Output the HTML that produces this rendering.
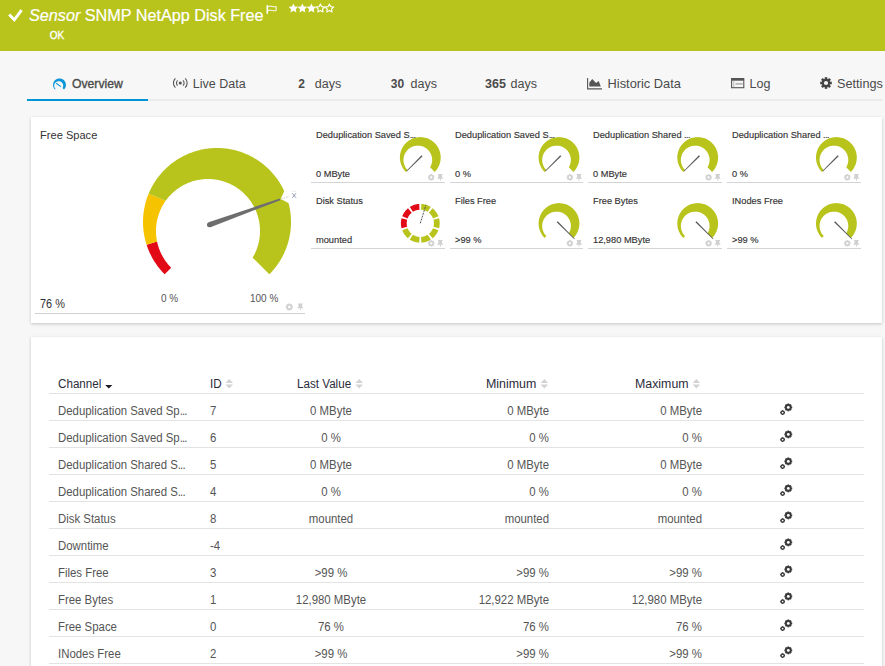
<!DOCTYPE html>
<html><head><meta charset="utf-8">
<style>
html,body{margin:0;padding:0;}
body{width:885px;height:666px;overflow:hidden;position:relative;background:#f7f7f7;font-family:"Liberation Sans",sans-serif;}
.a{position:absolute;white-space:nowrap;line-height:1;}
#hdr{position:absolute;left:0;top:0;width:885px;height:51px;background:#b8c41c;}
.tab{color:#4a4a4a;font-size:12.5px;top:77.7px;}
.card{position:absolute;background:#fff;box-shadow:0 1px 3px rgba(0,0,0,0.21);}
.st{font-size:9.6px;color:#333;-webkit-text-stroke:0.15px #333;transform:scaleX(0.965);transform-origin:0 0;}
.sv{font-size:9.6px;color:#333;-webkit-text-stroke:0.15px #333;transform:scaleX(0.965);transform-origin:0 0;}
.hl{position:absolute;height:1px;background:#d4d4d4;}
.th{font-size:12px;color:#2b2b3b;top:378px;transform:scaleX(0.97);transform-origin:0 0;}
.td{font-size:12px;color:#555;transform:scaleX(0.95);transform-origin:0 0;}
.tc{transform-origin:50% 0;}
.tr{transform-origin:100% 0;}
.row{position:absolute;left:49px;width:815px;height:1px;background:#e4e4e4;}
</style></head><body>
<div id="hdr"></div>
<svg class="a" style="left:0;top:0" width="885" height="51">
  <path d="M9.2,14.6 L14.3,19.8 L21.6,10.2" fill="none" stroke="#fff" stroke-width="2.9"/>
  <rect x="266.5" y="5.2" width="1.6" height="8.6" fill="#fff"/>
  <path d="M268,6.5 Q270.2,5.7 272.2,6.5 T276.2,6.5 V10.5 Q274.2,11.3 272.2,10.5 T268,10.5" fill="none" stroke="#fff" stroke-width="1"/>
</svg>
<div class="a" style="left:29px;top:7.4px;font-size:16.2px;color:#fff;-webkit-text-stroke:0.2px #fff;"><i>Sensor</i> SNMP NetApp Disk Free</div>
<div class="a" style="left:49.7px;top:30.6px;font-size:10px;color:#fff;-webkit-text-stroke:0.35px #fff;">OK</div>
<svg class="a" style="left:0;top:0" width="340" height="20"><polygon points="293.40,3.40 294.84,6.42 298.16,6.85 295.73,9.16 296.34,12.45 293.40,10.85 290.46,12.45 291.07,9.16 288.64,6.85 291.96,6.42" fill="#fff"/><polygon points="302.40,3.40 303.84,6.42 307.16,6.85 304.73,9.16 305.34,12.45 302.40,10.85 299.46,12.45 300.07,9.16 297.64,6.85 300.96,6.42" fill="#fff"/><polygon points="311.40,3.40 312.84,6.42 316.16,6.85 313.73,9.16 314.34,12.45 311.40,10.85 308.46,12.45 309.07,9.16 306.64,6.85 309.96,6.42" fill="#fff"/><polygon points="320.40,3.90 321.69,6.62 324.68,7.01 322.49,9.08 323.05,12.04 320.40,10.60 317.75,12.04 318.31,9.08 316.12,7.01 319.11,6.62" fill="none" stroke="#fff" stroke-width="1.1" stroke-linejoin="round"/><polygon points="329.40,3.90 330.69,6.62 333.68,7.01 331.49,9.08 332.05,12.04 329.40,10.60 326.75,12.04 327.31,9.08 325.12,7.01 328.11,6.62" fill="none" stroke="#fff" stroke-width="1.1" stroke-linejoin="round"/></svg>

<!-- tabs -->
<div class="a" style="left:27px;top:99px;width:856px;height:2px;background:#ebebeb;"></div>
<div class="a" style="left:27px;top:99px;width:121px;height:2px;background:#0096d6;"></div>
<svg class="a" style="left:0;top:60px" width="80" height="40"><path d="M55.02,29.54 L54.5,28.98 L54.05,28.36 L53.68,27.69 L53.39,26.98 L53.19,26.24 L53.08,25.48 L53.05,24.72 L53.12,23.96 L53.28,23.21 L53.52,22.48 L53.85,21.79 L54.26,21.15 L54.74,20.55 L55.29,20.02 L55.89,19.55 L56.55,19.16 L57.25,18.85 L57.98,18.63 L58.74,18.5 L59.5,18.45 L60.26,18.5 L61.02,18.63 L61.75,18.85 L62.45,19.16 L63.11,19.55 L63.71,20.02 L64.26,20.55 L64.74,21.15 L65.15,21.79 L65.48,22.48 L65.72,23.21 L65.88,23.96 L65.95,24.72 L65.92,25.48 L65.81,26.24 L65.61,26.98 L65.32,27.69 L64.95,28.36 L64.5,28.98 L63.98,29.54 L62.54,28.05 L62.79,27.58 L62.97,27.11 L63.1,26.63 L63.18,26.15 L63.2,25.69 L63.18,25.23 L63.11,24.8 L63,24.38 L62.86,23.99 L62.69,23.61 L62.48,23.26 L62.25,22.93 L61.99,22.63 L61.7,22.35 L61.39,22.09 L61.06,21.87 L60.7,21.67 L60.32,21.5 L59.92,21.37 L59.5,21.27 L59.06,21.21 L58.61,21.2 L58.14,21.24 L57.66,21.32 L57.18,21.46 L56.71,21.67 L56.25,21.93 L55.81,22.25 L55.4,22.64 L55.03,23.09 L54.72,23.6 L54.47,24.16 L54.3,24.75 L54.21,25.38 L54.21,26.02 L54.31,26.67 L54.49,27.3 L54.77,27.9 L55.14,28.45 L55.59,28.95Z" fill="#0a96d8"/><path d="M56.2,23.2 L60.9,26.6" stroke="#0a96d8" stroke-width="1.1"/></svg>
<div class="a tab" style="left:72px;font-size:12.2px;top:77.9px;-webkit-text-stroke:0.35px #4a4a4a;">Overview</div>
<svg class="a" style="left:173px;top:77px" width="15" height="12">
  <circle cx="7.3" cy="6" r="1.6" fill="#555"/>
  <path d="M4.6,3.3 A3.8,3.8 0 0 0 4.6,8.7 M10,3.3 A3.8,3.8 0 0 1 10,8.7" fill="none" stroke="#555" stroke-width="1.1"/>
  <path d="M2.4,1.3 A6.6,6.6 0 0 0 2.4,10.7 M12.2,1.3 A6.6,6.6 0 0 1 12.2,10.7" fill="none" stroke="#555" stroke-width="1.1"/>
</svg>
<div class="a tab" style="left:192.8px;">Live Data</div>
<div class="a tab" style="left:298.3px;font-weight:bold;font-size:12px;top:78.1px;">2</div>
<div class="a tab" style="left:314.8px;">days</div>
<div class="a tab" style="left:390.8px;font-weight:bold;font-size:12px;top:78.1px;">30</div>
<div class="a tab" style="left:410.5px;">days</div>
<div class="a tab" style="left:485px;font-weight:bold;font-size:12.5px;">365</div>
<div class="a tab" style="left:510.6px;">days</div>
<svg class="a" style="left:586px;top:77px" width="17" height="13">
  <path d="M1.6,1 V11.9 H16" fill="none" stroke="#555" stroke-width="1.1"/>
  <path d="M3.3,9.6 V5.7 L6.2,2 L10.1,6 L12.7,4 L14.8,9.6 Z" fill="#555"/>
</svg>
<div class="a tab" style="left:607.6px;font-size:12.8px;">Historic Data</div>
<svg class="a" style="left:731px;top:78px" width="15" height="12">
  <rect x="0.6" y="0.5" width="12.2" height="9.2" fill="none" stroke="#555" stroke-width="1.1"/>
  <rect x="0.6" y="0" width="12.2" height="2.7" fill="#555"/>
  <rect x="4.4" y="4.9" width="7.4" height="1.9" fill="#bbb"/>
  <rect x="2" y="3" width="1.4" height="6" fill="#ccc"/>
</svg>
<div class="a tab" style="left:749.5px;">Log</div>
<svg class="a" style="left:819px;top:76px" width="14" height="14">
  <g transform="translate(7,7)">
    <circle r="4.2" fill="#444"/>
    <g fill="#444">
      <rect x="-1.3" y="-5.8" width="2.6" height="11.6"/>
      <rect x="-1.3" y="-5.8" width="2.6" height="11.6" transform="rotate(45)"/>
      <rect x="-1.3" y="-5.8" width="2.6" height="11.6" transform="rotate(90)"/>
      <rect x="-1.3" y="-5.8" width="2.6" height="11.6" transform="rotate(135)"/>
    </g>
    <circle r="2.1" fill="#f7f7f7"/>
  </g>
</svg>
<div class="a tab" style="left:837px;font-size:12.7px;">Settings</div>

<!-- card 1 -->
<div class="card" style="left:31px;top:117px;width:851px;height:206px;"></div>
<div class="a" style="left:40px;top:130.2px;font-size:11.8px;color:#333;transform:scaleX(0.94);transform-origin:0 0;">Free Space</div>
<svg class="a" style="left:0;top:0" width="885" height="340">
<path d="M164.67,274.33 L164.06,273.71 L163.46,273.08 L162.86,272.44 L162.27,271.8 L161.68,271.15 L161.11,270.5 L160.54,269.84 L159.98,269.17 L159.43,268.49 L158.89,267.81 L158.35,267.13 L157.82,266.43 L157.3,265.73 L156.79,265.02 L156.29,264.31 L155.8,263.59 L155.31,262.87 L154.83,262.14 L154.36,261.41 L153.9,260.66 L153.45,259.92 L153.01,259.17 L152.58,258.41 L152.15,257.65 L151.74,256.88 L151.33,256.11 L150.93,255.34 L150.55,254.56 L150.17,253.77 L149.8,252.98 L149.44,252.19 L149.09,251.39 L148.74,250.59 L148.41,249.78 L148.09,248.97 L147.78,248.16 L147.47,247.34 L147.18,246.52 L146.9,245.69 L146.62,244.87 L157.07,241.47 L157.22,242.2 L157.39,242.93 L157.57,243.66 L157.75,244.39 L157.95,245.11 L158.16,245.83 L158.38,246.55 L158.61,247.27 L158.85,247.98 L159.1,248.69 L159.36,249.4 L159.64,250.1 L159.92,250.8 L160.21,251.5 L160.51,252.19 L160.83,252.88 L161.15,253.57 L161.49,254.25 L161.83,254.92 L162.18,255.59 L162.55,256.26 L162.92,256.92 L163.3,257.57 L163.7,258.23 L164.1,258.87 L164.51,259.51 L164.93,260.14 L165.36,260.77 L165.8,261.39 L166.25,262 L166.71,262.61 L167.18,263.21 L167.66,263.81 L168.14,264.4 L168.64,264.98 L169.14,265.55 L169.65,266.12 L170.17,266.68 L170.7,267.23 L171.23,267.77Z" fill="#e30a17"/>
<path d="M146.62,244.87 L146.23,243.62 L145.86,242.37 L145.51,241.11 L145.18,239.84 L144.88,238.57 L144.6,237.29 L144.34,236.01 L144.1,234.72 L143.89,233.43 L143.7,232.14 L143.53,230.84 L143.39,229.54 L143.26,228.24 L143.16,226.94 L143.09,225.63 L143.04,224.32 L143.01,223.02 L143,221.71 L143.02,220.4 L143.06,219.09 L143.12,217.79 L143.21,216.48 L143.31,215.18 L143.45,213.88 L143.6,212.58 L143.78,211.29 L143.98,209.99 L144.2,208.71 L144.45,207.42 L144.72,206.14 L145.01,204.87 L145.32,203.6 L145.66,202.33 L146.02,201.08 L146.4,199.82 L146.8,198.58 L147.23,197.34 L147.67,196.11 L148.14,194.89 L148.63,193.68 L165.7,200.75 L165.12,201.58 L164.56,202.42 L164.01,203.27 L163.47,204.14 L162.95,205.02 L162.45,205.92 L161.96,206.83 L161.49,207.75 L161.03,208.68 L160.6,209.62 L160.18,210.58 L159.77,211.55 L159.39,212.53 L159.03,213.52 L158.68,214.52 L158.36,215.53 L158.05,216.54 L157.76,217.57 L157.5,218.61 L157.25,219.65 L157.03,220.7 L156.83,221.76 L156.65,222.83 L156.49,223.9 L156.35,224.98 L156.23,226.06 L156.14,227.15 L156.07,228.24 L156.03,229.34 L156,230.44 L156,231.54 L156.03,232.64 L156.07,233.75 L156.14,234.85 L156.24,235.96 L156.35,237.06 L156.5,238.17 L156.66,239.27 L156.85,240.37 L157.07,241.47Z" fill="#f5c300"/>
<path d="M148.63,193.68 L149.14,192.48 L149.68,191.28 L150.23,190.1 L150.8,188.92 L151.4,187.76 L152.01,186.61 L152.65,185.46 L153.31,184.33 L153.98,183.21 L154.68,182.1 L155.39,181.01 L156.12,179.93 L156.88,178.86 L157.65,177.8 L158.44,176.76 L159.25,175.73 L160.07,174.72 L160.92,173.72 L161.78,172.74 L162.66,171.77 L163.56,170.82 L164.47,169.88 L165.4,168.96 L166.34,168.06 L167.3,167.17 L168.28,166.3 L169.27,165.45 L170.28,164.61 L171.3,163.8 L172.34,163 L173.39,162.22 L174.45,161.46 L175.53,160.71 L176.62,159.99 L177.72,159.29 L178.83,158.6 L179.96,157.94 L181.1,157.29 L182.24,156.67 L183.4,156.07 L184.58,155.48 L185.76,154.92 L186.95,154.38 L188.15,153.86 L189.35,153.36 L190.57,152.88 L191.8,152.42 L193.03,151.99 L194.27,151.58 L195.52,151.19 L196.77,150.82 L198.03,150.47 L199.3,150.15 L200.57,149.85 L201.85,149.57 L203.13,149.31 L204.42,149.08 L205.71,148.87 L207.01,148.68 L208.3,148.51 L209.6,148.37 L210.9,148.25 L212.21,148.16 L213.51,148.08 L214.82,148.03 L216.13,148.01 L217.44,148 L218.74,148.02 L220.05,148.06 L221.36,148.13 L222.66,148.22 L223.96,148.33 L225.26,148.46 L226.56,148.62 L227.86,148.8 L229.15,149 L230.44,149.23 L231.72,149.48 L233,149.75 L234.27,150.04 L235.54,150.36 L236.81,150.7 L238.06,151.06 L239.31,151.44 L240.56,151.85 L241.79,152.28 L243.02,152.73 L244.24,153.2 L245.45,153.69 L246.66,154.2 L247.85,154.74 L249.03,155.29 L250.21,155.87 L251.37,156.47 L252.52,157.08 L253.66,157.72 L254.79,158.38 L255.91,159.06 L257.02,159.75 L258.11,160.47 L259.19,161.21 L260.26,161.96 L261.31,162.74 L262.36,163.53 L263.38,164.34 L264.39,165.17 L265.39,166.01 L266.37,166.88 L267.34,167.76 L268.29,168.66 L269.22,169.57 L270.14,170.5 L271.04,171.45 L271.93,172.41 L272.8,173.39 L273.65,174.38 L274.48,175.39 L275.29,176.42 L276.09,177.45 L276.87,178.5 L277.63,179.57 L278.37,180.65 L279.09,181.74 L279.79,182.84 L280.47,183.96 L281.13,185.08 L281.78,186.22 L282.4,187.37 L283,188.53 L283.58,189.71 L284.14,190.89 L283.55,192.58 L282.85,194.27 L282.11,195.93 L281.33,197.55 L280.51,199.14 L282.15,199.84 L283.78,200.59 L285.41,201.39 L287.03,202.25 L288.57,203.18 L288.89,204.44 L289.19,205.72 L289.46,206.99 L289.72,208.28 L289.95,209.56 L290.16,210.85 L290.34,212.15 L290.5,213.45 L290.64,214.75 L290.76,216.05 L290.85,217.35 L290.92,218.66 L290.97,219.97 L291,221.27 L291,222.58 L290.98,223.89 L290.93,225.2 L290.86,226.5 L290.77,227.81 L290.66,229.11 L290.52,230.41 L290.36,231.71 L290.18,233 L289.97,234.29 L289.74,235.58 L289.49,236.86 L289.22,238.14 L288.92,239.42 L288.6,240.68 L288.26,241.95 L287.9,243.2 L287.51,244.45 L287.1,245.69 L286.67,246.93 L286.22,248.16 L285.75,249.38 L285.26,250.59 L284.74,251.79 L284.2,252.98 L283.64,254.16 L283.07,255.34 L282.47,256.5 L281.85,257.65 L281.21,258.79 L280.55,259.92 L279.87,261.04 L279.17,262.14 L278.45,263.23 L277.71,264.31 L276.95,265.38 L276.18,266.43 L275.38,267.47 L274.57,268.49 L273.74,269.5 L272.89,270.5 L272.03,271.48 L271.14,272.44 L270.24,273.39 L269.33,274.33 L252.65,257.65 L253.11,256.86 L253.56,256.06 L253.99,255.26 L254.41,254.46 L254.81,253.65 L255.19,252.84 L255.56,252.03 L255.91,251.21 L256.25,250.4 L256.57,249.58 L256.87,248.76 L257.17,247.93 L257.44,247.11 L257.7,246.29 L257.95,245.46 L258.18,244.64 L258.4,243.81 L258.6,242.99 L258.79,242.17 L258.96,241.34 L259.12,240.52 L259.27,239.7 L259.4,238.88 L259.52,238.07 L259.62,237.25 L259.71,236.44 L259.79,235.63 L259.86,234.82 L259.91,234.01 L259.95,233.21 L259.98,232.41 L260,231.61 L260,230.82 L259.99,230.03 L259.97,229.24 L259.94,228.46 L259.89,227.68 L259.84,226.9 L259.77,226.13 L259.69,225.36 L259.6,224.6 L259.5,223.84 L259.39,223.08 L259.27,222.33 L259.14,221.59 L259,220.85 L258.85,220.11 L258.68,219.38 L258.51,218.65 L258.33,217.93 L258.14,217.21 L257.94,216.5 L257.73,215.8 L257.51,215.09 L257.28,214.4 L257.04,213.71 L256.79,213.02 L256.54,212.34 L256.27,211.67 L256,211 L255.72,210.34 L255.43,209.68 L255.13,209.03 L254.82,208.38 L254.51,207.74 L254.19,207.11 L253.86,206.48 L253.52,205.86 L253.17,205.24 L252.82,204.63 L252.45,204.02 L252.09,203.42 L251.71,202.83 L251.32,202.24 L250.93,201.66 L250.53,201.09 L250.13,200.52 L249.72,199.95 L249.29,199.4 L248.87,198.85 L248.43,198.3 L247.99,197.76 L247.54,197.23 L247.09,196.71 L246.63,196.19 L246.16,195.68 L245.68,195.17 L245.2,194.67 L244.71,194.18 L244.22,193.69 L243.72,193.21 L243.21,192.74 L242.7,192.27 L242.18,191.81 L241.65,191.36 L241.12,190.91 L240.58,190.47 L240.03,190.04 L239.48,189.61 L238.92,189.19 L238.36,188.78 L237.79,188.38 L237.21,187.98 L236.63,187.59 L236.04,187.21 L235.44,186.83 L234.84,186.46 L234.24,186.1 L233.62,185.75 L233.01,185.41 L232.38,185.07 L231.75,184.74 L231.12,184.42 L230.47,184.11 L229.83,183.8 L229.17,183.51 L228.52,183.22 L227.85,182.94 L227.18,182.67 L226.51,182.4 L225.83,182.15 L225.14,181.91 L224.45,181.67 L223.75,181.44 L223.05,181.23 L222.34,181.02 L221.63,180.82 L220.91,180.63 L220.19,180.45 L219.46,180.28 L218.73,180.12 L217.99,179.97 L217.25,179.83 L216.5,179.7 L215.75,179.58 L214.99,179.47 L214.23,179.38 L213.47,179.29 L212.7,179.21 L211.93,179.15 L211.15,179.1 L210.37,179.05 L209.59,179.02 L208.8,179.01 L208.01,179 L207.21,179.01 L206.41,179.02 L205.61,179.05 L204.81,179.1 L204,179.15 L203.19,179.22 L202.38,179.3 L201.57,179.4 L200.75,179.51 L199.93,179.63 L199.12,179.76 L198.29,179.91 L197.47,180.08 L196.65,180.25 L195.83,180.44 L195,180.65 L194.18,180.87 L193.35,181.11 L192.53,181.35 L191.71,181.62 L190.88,181.9 L190.06,182.19 L189.24,182.5 L188.42,182.83 L187.6,183.17 L186.79,183.52 L185.98,183.89 L185.17,184.28 L184.36,184.68 L183.56,185.1 L182.76,185.54 L181.96,185.99 L181.17,186.45 L180.39,186.94 L179.61,187.44 L178.83,187.95 L178.06,188.48 L177.3,189.03 L176.55,189.59 L175.8,190.17 L175.06,190.77 L174.32,191.38 L173.6,192 L172.88,192.65 L172.18,193.31 L171.48,193.98 L170.79,194.67 L170.12,195.38 L169.45,196.1 L168.79,196.84 L168.15,197.59 L167.52,198.36 L166.9,199.14 L166.3,199.94 L165.7,200.75Z" fill="#b8c41c"/>
<path d="M210.35,227.16 L280.34,200.15 L279.73,198.46 L208.59,222.26Z" fill="#6e6e6e"/>
<defs><linearGradient id="ng" x1="0" y1="0" x2="1" y2="1"><stop offset="0" stop-color="#333"/><stop offset="1" stop-color="#777"/></linearGradient></defs>
<path d="M281,199 L289,196.5" stroke="#bbb" stroke-width="0.8" stroke-dasharray="1.5,1.2"/><path d="M292.3,193.2 L296,197.8 M296,193.2 L292.3,197.8" stroke="#8a8fa8" stroke-width="0.9"/><path d="M291.5,191.3 H296.5" stroke="#ddd" stroke-width="0.6"/>
<circle cx="209.47" cy="224.71" r="2.5" fill="#6b6b6b"/>
<path d="M405.88,171.92 L405.05,171.05 L404.28,170.13 L403.56,169.16 L402.91,168.16 L402.31,167.12 L401.77,166.04 L401.3,164.94 L400.9,163.8 L400.56,162.65 L400.29,161.48 L400.09,160.3 L399.96,159.1 L399.9,157.9 L399.92,156.7 L400,155.5 L400.15,154.31 L400.37,153.13 L400.67,151.96 L401.03,150.82 L401.45,149.69 L401.95,148.6 L402.5,147.53 L403.12,146.5 L403.8,145.51 L404.53,144.56 L405.32,143.65 L406.16,142.79 L407.05,141.99 L407.99,141.23 L408.97,140.54 L409.98,139.9 L411.04,139.32 L412.12,138.81 L413.24,138.36 L414.38,137.98 L415.54,137.66 L416.71,137.42 L417.9,137.24 L419.1,137.14 L420.3,137.1 L421.5,137.14 L422.7,137.24 L423.89,137.42 L425.06,137.66 L426.22,137.98 L427.36,138.36 L428.48,138.81 L429.56,139.32 L430.62,139.9 L431.63,140.54 L432.61,141.23 L433.55,141.99 L434.44,142.79 L435.28,143.65 L436.07,144.56 L436.8,145.51 L437.48,146.5 L438.1,147.53 L438.65,148.6 L439.15,149.69 L439.57,150.82 L439.93,151.96 L440.23,153.13 L440.45,154.31 L440.6,155.5 L440.68,156.7 L440.7,157.9 L440.64,159.1 L440.51,160.3 L440.31,161.48 L440.04,162.65 L439.7,163.8 L439.3,164.94 L438.83,166.04 L438.29,167.12 L437.69,168.16 L437.04,169.16 L436.32,170.13 L435.55,171.05 L434.72,171.92 L430.13,167.33 L430.54,166.6 L430.9,165.85 L431.21,165.1 L431.47,164.35 L431.69,163.59 L431.87,162.83 L432,162.08 L432.09,161.33 L432.14,160.59 L432.15,159.86 L432.13,159.14 L432.07,158.43 L431.98,157.73 L431.85,157.05 L431.69,156.38 L431.51,155.72 L431.29,155.09 L431.05,154.47 L430.78,153.86 L430.49,153.28 L430.17,152.71 L429.83,152.16 L429.47,151.63 L429.09,151.12 L428.68,150.62 L428.25,150.15 L427.8,149.7 L427.34,149.26 L426.85,148.85 L426.34,148.46 L425.82,148.09 L425.27,147.74 L424.71,147.41 L424.13,147.11 L423.54,146.83 L422.92,146.58 L422.29,146.36 L421.64,146.17 L420.98,146 L420.3,145.86 L419.61,145.76 L418.9,145.69 L418.18,145.65 L417.46,145.65 L416.72,145.69 L415.97,145.77 L415.22,145.88 L414.46,146.04 L413.71,146.25 L412.95,146.5 L412.2,146.79 L411.45,147.14 L410.71,147.53 L409.99,147.97 L409.29,148.46 L408.6,149 L407.94,149.59 L407.31,150.23 L406.72,150.91 L406.16,151.64 L405.64,152.42 L405.17,153.23 L404.75,154.09 L404.38,154.98 L404.08,155.9 L403.83,156.85 L403.65,157.83 L403.53,158.82 L403.48,159.83 L403.51,160.84 L403.61,161.86 L403.78,162.87 L404.02,163.87 L404.34,164.86 L404.73,165.82 L405.19,166.76 L405.72,167.66 L406.31,168.53 L406.97,169.35 L407.68,170.12Z" fill="#b8c41c"/><path d="M421.54,155.2 L406.26,171.04 L406.76,171.54 L422.6,156.26Z" fill="#5a5a5a"/>
<path d="M544.58,171.92 L543.75,171.05 L542.98,170.13 L542.26,169.16 L541.61,168.16 L541.01,167.12 L540.47,166.04 L540,164.94 L539.6,163.8 L539.26,162.65 L538.99,161.48 L538.79,160.3 L538.66,159.1 L538.6,157.9 L538.62,156.7 L538.7,155.5 L538.85,154.31 L539.07,153.13 L539.37,151.96 L539.73,150.82 L540.15,149.69 L540.65,148.6 L541.2,147.53 L541.82,146.5 L542.5,145.51 L543.23,144.56 L544.02,143.65 L544.86,142.79 L545.75,141.99 L546.69,141.23 L547.67,140.54 L548.68,139.9 L549.74,139.32 L550.82,138.81 L551.94,138.36 L553.08,137.98 L554.24,137.66 L555.41,137.42 L556.6,137.24 L557.8,137.14 L559,137.1 L560.2,137.14 L561.4,137.24 L562.59,137.42 L563.76,137.66 L564.92,137.98 L566.06,138.36 L567.18,138.81 L568.26,139.32 L569.32,139.9 L570.33,140.54 L571.31,141.23 L572.25,141.99 L573.14,142.79 L573.98,143.65 L574.77,144.56 L575.5,145.51 L576.18,146.5 L576.8,147.53 L577.35,148.6 L577.85,149.69 L578.27,150.82 L578.63,151.96 L578.93,153.13 L579.15,154.31 L579.3,155.5 L579.38,156.7 L579.4,157.9 L579.34,159.1 L579.21,160.3 L579.01,161.48 L578.74,162.65 L578.4,163.8 L578,164.94 L577.53,166.04 L576.99,167.12 L576.39,168.16 L575.74,169.16 L575.02,170.13 L574.25,171.05 L573.42,171.92 L568.83,167.33 L569.24,166.6 L569.6,165.85 L569.91,165.1 L570.17,164.35 L570.39,163.59 L570.57,162.83 L570.7,162.08 L570.79,161.33 L570.84,160.59 L570.85,159.86 L570.83,159.14 L570.77,158.43 L570.68,157.73 L570.55,157.05 L570.39,156.38 L570.21,155.72 L569.99,155.09 L569.75,154.47 L569.48,153.86 L569.19,153.28 L568.87,152.71 L568.53,152.16 L568.17,151.63 L567.79,151.12 L567.38,150.62 L566.95,150.15 L566.5,149.7 L566.04,149.26 L565.55,148.85 L565.04,148.46 L564.52,148.09 L563.97,147.74 L563.41,147.41 L562.83,147.11 L562.24,146.83 L561.62,146.58 L560.99,146.36 L560.34,146.17 L559.68,146 L559,145.86 L558.31,145.76 L557.6,145.69 L556.88,145.65 L556.16,145.65 L555.42,145.69 L554.67,145.77 L553.92,145.88 L553.16,146.04 L552.41,146.25 L551.65,146.5 L550.9,146.79 L550.15,147.14 L549.41,147.53 L548.69,147.97 L547.99,148.46 L547.3,149 L546.64,149.59 L546.01,150.23 L545.42,150.91 L544.86,151.64 L544.34,152.42 L543.87,153.23 L543.45,154.09 L543.08,154.98 L542.78,155.9 L542.53,156.85 L542.35,157.83 L542.23,158.82 L542.18,159.83 L542.21,160.84 L542.31,161.86 L542.48,162.87 L542.72,163.87 L543.04,164.86 L543.43,165.82 L543.89,166.76 L544.42,167.66 L545.01,168.53 L545.67,169.35 L546.38,170.12Z" fill="#b8c41c"/><path d="M560.24,155.2 L544.96,171.04 L545.46,171.54 L561.3,156.26Z" fill="#5a5a5a"/>
<path d="M683.28,171.92 L682.45,171.05 L681.68,170.13 L680.96,169.16 L680.31,168.16 L679.71,167.12 L679.17,166.04 L678.7,164.94 L678.3,163.8 L677.96,162.65 L677.69,161.48 L677.49,160.3 L677.36,159.1 L677.3,157.9 L677.32,156.7 L677.4,155.5 L677.55,154.31 L677.77,153.13 L678.07,151.96 L678.43,150.82 L678.85,149.69 L679.35,148.6 L679.9,147.53 L680.52,146.5 L681.2,145.51 L681.93,144.56 L682.72,143.65 L683.56,142.79 L684.45,141.99 L685.39,141.23 L686.37,140.54 L687.38,139.9 L688.44,139.32 L689.52,138.81 L690.64,138.36 L691.78,137.98 L692.94,137.66 L694.11,137.42 L695.3,137.24 L696.5,137.14 L697.7,137.1 L698.9,137.14 L700.1,137.24 L701.29,137.42 L702.46,137.66 L703.62,137.98 L704.76,138.36 L705.88,138.81 L706.96,139.32 L708.02,139.9 L709.03,140.54 L710.01,141.23 L710.95,141.99 L711.84,142.79 L712.68,143.65 L713.47,144.56 L714.2,145.51 L714.88,146.5 L715.5,147.53 L716.05,148.6 L716.55,149.69 L716.97,150.82 L717.33,151.96 L717.63,153.13 L717.85,154.31 L718,155.5 L718.08,156.7 L718.1,157.9 L718.04,159.1 L717.91,160.3 L717.71,161.48 L717.44,162.65 L717.1,163.8 L716.7,164.94 L716.23,166.04 L715.69,167.12 L715.09,168.16 L714.44,169.16 L713.72,170.13 L712.95,171.05 L712.12,171.92 L707.53,167.33 L707.94,166.6 L708.3,165.85 L708.61,165.1 L708.87,164.35 L709.09,163.59 L709.27,162.83 L709.4,162.08 L709.49,161.33 L709.54,160.59 L709.55,159.86 L709.53,159.14 L709.47,158.43 L709.38,157.73 L709.25,157.05 L709.09,156.38 L708.91,155.72 L708.69,155.09 L708.45,154.47 L708.18,153.86 L707.89,153.28 L707.57,152.71 L707.23,152.16 L706.87,151.63 L706.49,151.12 L706.08,150.62 L705.65,150.15 L705.2,149.7 L704.74,149.26 L704.25,148.85 L703.74,148.46 L703.22,148.09 L702.67,147.74 L702.11,147.41 L701.53,147.11 L700.94,146.83 L700.32,146.58 L699.69,146.36 L699.04,146.17 L698.38,146 L697.7,145.86 L697.01,145.76 L696.3,145.69 L695.58,145.65 L694.86,145.65 L694.12,145.69 L693.37,145.77 L692.62,145.88 L691.86,146.04 L691.11,146.25 L690.35,146.5 L689.6,146.79 L688.85,147.14 L688.11,147.53 L687.39,147.97 L686.69,148.46 L686,149 L685.34,149.59 L684.71,150.23 L684.12,150.91 L683.56,151.64 L683.04,152.42 L682.57,153.23 L682.15,154.09 L681.78,154.98 L681.48,155.9 L681.23,156.85 L681.05,157.83 L680.93,158.82 L680.88,159.83 L680.91,160.84 L681.01,161.86 L681.18,162.87 L681.42,163.87 L681.74,164.86 L682.13,165.82 L682.59,166.76 L683.12,167.66 L683.71,168.53 L684.37,169.35 L685.08,170.12Z" fill="#b8c41c"/><path d="M698.94,155.2 L683.66,171.04 L684.16,171.54 L700,156.26Z" fill="#5a5a5a"/>
<path d="M821.98,171.92 L821.15,171.05 L820.38,170.13 L819.66,169.16 L819.01,168.16 L818.41,167.12 L817.87,166.04 L817.4,164.94 L817,163.8 L816.66,162.65 L816.39,161.48 L816.19,160.3 L816.06,159.1 L816,157.9 L816.02,156.7 L816.1,155.5 L816.25,154.31 L816.47,153.13 L816.77,151.96 L817.13,150.82 L817.55,149.69 L818.05,148.6 L818.6,147.53 L819.22,146.5 L819.9,145.51 L820.63,144.56 L821.42,143.65 L822.26,142.79 L823.15,141.99 L824.09,141.23 L825.07,140.54 L826.08,139.9 L827.14,139.32 L828.22,138.81 L829.34,138.36 L830.48,137.98 L831.64,137.66 L832.81,137.42 L834,137.24 L835.2,137.14 L836.4,137.1 L837.6,137.14 L838.8,137.24 L839.99,137.42 L841.16,137.66 L842.32,137.98 L843.46,138.36 L844.58,138.81 L845.66,139.32 L846.72,139.9 L847.73,140.54 L848.71,141.23 L849.65,141.99 L850.54,142.79 L851.38,143.65 L852.17,144.56 L852.9,145.51 L853.58,146.5 L854.2,147.53 L854.75,148.6 L855.25,149.69 L855.67,150.82 L856.03,151.96 L856.33,153.13 L856.55,154.31 L856.7,155.5 L856.78,156.7 L856.8,157.9 L856.74,159.1 L856.61,160.3 L856.41,161.48 L856.14,162.65 L855.8,163.8 L855.4,164.94 L854.93,166.04 L854.39,167.12 L853.79,168.16 L853.14,169.16 L852.42,170.13 L851.65,171.05 L850.82,171.92 L846.23,167.33 L846.64,166.6 L847,165.85 L847.31,165.1 L847.57,164.35 L847.79,163.59 L847.97,162.83 L848.1,162.08 L848.19,161.33 L848.24,160.59 L848.25,159.86 L848.23,159.14 L848.17,158.43 L848.08,157.73 L847.95,157.05 L847.79,156.38 L847.61,155.72 L847.39,155.09 L847.15,154.47 L846.88,153.86 L846.59,153.28 L846.27,152.71 L845.93,152.16 L845.57,151.63 L845.19,151.12 L844.78,150.62 L844.35,150.15 L843.9,149.7 L843.44,149.26 L842.95,148.85 L842.44,148.46 L841.92,148.09 L841.37,147.74 L840.81,147.41 L840.23,147.11 L839.64,146.83 L839.02,146.58 L838.39,146.36 L837.74,146.17 L837.08,146 L836.4,145.86 L835.71,145.76 L835,145.69 L834.28,145.65 L833.56,145.65 L832.82,145.69 L832.07,145.77 L831.32,145.88 L830.56,146.04 L829.81,146.25 L829.05,146.5 L828.3,146.79 L827.55,147.14 L826.81,147.53 L826.09,147.97 L825.39,148.46 L824.7,149 L824.04,149.59 L823.41,150.23 L822.82,150.91 L822.26,151.64 L821.74,152.42 L821.27,153.23 L820.85,154.09 L820.48,154.98 L820.18,155.9 L819.93,156.85 L819.75,157.83 L819.63,158.82 L819.58,159.83 L819.61,160.84 L819.71,161.86 L819.88,162.87 L820.12,163.87 L820.44,164.86 L820.83,165.82 L821.29,166.76 L821.82,167.66 L822.41,168.53 L823.07,169.35 L823.78,170.12Z" fill="#b8c41c"/><path d="M837.64,155.2 L822.36,171.04 L822.86,171.54 L838.7,156.26Z" fill="#5a5a5a"/>
<path d="M421.38,203.93 L422.22,203.99 L423.04,204.1 L423.87,204.23 L424.69,204.4 L425.5,204.61 L426.29,204.85 L427.08,205.12 L427.86,205.43 L428.62,205.78 L429.37,206.15 L430.1,206.56 L430.81,206.99 L427.67,211.87 L427.17,211.56 L426.66,211.28 L426.13,211.01 L425.6,210.77 L425.06,210.56 L424.5,210.37 L423.94,210.2 L423.37,210.05 L422.8,209.93 L422.22,209.84 L421.64,209.77 L421.06,209.72Z" fill="#b8c41c"/><path d="M432.56,208.27 L433.2,208.81 L433.81,209.38 L434.4,209.97 L434.96,210.59 L435.49,211.23 L435.99,211.9 L436.47,212.58 L436.92,213.29 L437.33,214.01 L437.72,214.76 L438.07,215.51 L438.39,216.28 L432.98,218.38 L432.76,217.84 L432.51,217.31 L432.24,216.79 L431.95,216.28 L431.64,215.79 L431.3,215.31 L430.95,214.84 L430.57,214.39 L430.18,213.96 L429.77,213.54 L429.34,213.14 L428.9,212.76Z" fill="#b8c41c"/><path d="M439.06,218.34 L439.25,219.16 L439.41,219.98 L439.54,220.8 L439.63,221.63 L439.68,222.47 L439.7,223.3 L439.68,224.13 L439.63,224.97 L439.54,225.8 L439.41,226.62 L439.25,227.44 L439.06,228.26 L433.45,226.77 L433.59,226.2 L433.7,225.63 L433.79,225.05 L433.85,224.47 L433.89,223.89 L433.9,223.3 L433.89,222.71 L433.85,222.13 L433.79,221.55 L433.7,220.97 L433.59,220.4 L433.45,219.83Z" fill="#b8c41c"/><path d="M438.39,230.32 L438.07,231.09 L437.72,231.84 L437.33,232.59 L436.92,233.31 L436.47,234.02 L435.99,234.7 L435.49,235.37 L434.96,236.01 L434.4,236.63 L433.81,237.22 L433.2,237.79 L432.56,238.33 L428.9,233.84 L429.34,233.46 L429.77,233.06 L430.18,232.64 L430.57,232.21 L430.95,231.76 L431.3,231.29 L431.64,230.81 L431.95,230.32 L432.24,229.81 L432.51,229.29 L432.76,228.76 L432.98,228.22Z" fill="#b8c41c"/><path d="M430.81,239.61 L430.1,240.04 L429.37,240.45 L428.62,240.82 L427.86,241.17 L427.08,241.48 L426.29,241.75 L425.5,241.99 L424.69,242.2 L423.87,242.37 L423.04,242.5 L422.22,242.61 L421.38,242.67 L421.06,236.88 L421.64,236.83 L422.22,236.76 L422.8,236.67 L423.37,236.55 L423.94,236.4 L424.5,236.23 L425.06,236.04 L425.6,235.83 L426.13,235.59 L426.66,235.32 L427.17,235.04 L427.67,234.73Z" fill="#b8c41c"/><path d="M419.22,242.67 L418.38,242.61 L417.56,242.5 L416.73,242.37 L415.91,242.2 L415.1,241.99 L414.31,241.75 L413.52,241.48 L412.74,241.17 L411.98,240.82 L411.23,240.45 L410.5,240.04 L409.79,239.61 L412.93,234.73 L413.43,235.04 L413.94,235.32 L414.47,235.59 L415,235.83 L415.54,236.04 L416.1,236.23 L416.66,236.4 L417.23,236.55 L417.8,236.67 L418.38,236.76 L418.96,236.83 L419.54,236.88Z" fill="#b8c41c"/><path d="M408.04,238.33 L407.4,237.79 L406.79,237.22 L406.2,236.63 L405.64,236.01 L405.11,235.37 L404.61,234.7 L404.13,234.02 L403.68,233.31 L403.27,232.59 L402.88,231.84 L402.53,231.09 L402.21,230.32 L407.62,228.22 L407.84,228.76 L408.09,229.29 L408.36,229.81 L408.65,230.32 L408.96,230.81 L409.3,231.29 L409.65,231.76 L410.03,232.21 L410.42,232.64 L410.83,233.06 L411.26,233.46 L411.7,233.84Z" fill="#b8c41c"/><path d="M401.54,228.26 L401.35,227.44 L401.19,226.62 L401.06,225.8 L400.97,224.97 L400.92,224.13 L400.9,223.3 L400.92,222.47 L400.97,221.63 L401.06,220.8 L401.19,219.98 L401.35,219.16 L401.54,218.34 L407.15,219.83 L407.01,220.4 L406.9,220.97 L406.81,221.55 L406.75,222.13 L406.71,222.71 L406.7,223.3 L406.71,223.89 L406.75,224.47 L406.81,225.05 L406.9,225.63 L407.01,226.2 L407.15,226.77Z" fill="#e30a17"/><path d="M402.21,216.28 L402.53,215.51 L402.88,214.76 L403.27,214.01 L403.68,213.29 L404.13,212.58 L404.61,211.9 L405.11,211.23 L405.64,210.59 L406.2,209.97 L406.79,209.38 L407.4,208.81 L408.04,208.27 L411.7,212.76 L411.26,213.14 L410.83,213.54 L410.42,213.96 L410.03,214.39 L409.65,214.84 L409.3,215.31 L408.96,215.79 L408.65,216.28 L408.36,216.79 L408.09,217.31 L407.84,217.84 L407.62,218.38Z" fill="#e30a17"/><path d="M409.79,206.99 L410.5,206.56 L411.23,206.15 L411.98,205.78 L412.74,205.43 L413.52,205.12 L414.31,204.85 L415.1,204.61 L415.91,204.4 L416.73,204.23 L417.56,204.1 L418.38,203.99 L419.22,203.93 L419.54,209.72 L418.96,209.77 L418.38,209.84 L417.8,209.93 L417.23,210.05 L416.66,210.2 L416.1,210.37 L415.54,210.56 L415,210.77 L414.47,211.01 L413.94,211.28 L413.43,211.56 L412.93,211.87Z" fill="#e30a17"/><line x1="420.3" y1="223.3" x2="425.86" y2="205.13" stroke="#555" stroke-width="1" stroke-dasharray="2,1"/>
<path d="M544.58,237.92 L543.75,237.05 L542.98,236.13 L542.26,235.16 L541.61,234.16 L541.01,233.12 L540.47,232.04 L540,230.94 L539.6,229.8 L539.26,228.65 L538.99,227.48 L538.79,226.3 L538.66,225.1 L538.6,223.9 L538.62,222.7 L538.7,221.5 L538.85,220.31 L539.07,219.13 L539.37,217.96 L539.73,216.82 L540.15,215.69 L540.65,214.6 L541.2,213.53 L541.82,212.5 L542.5,211.51 L543.23,210.56 L544.02,209.65 L544.86,208.79 L545.75,207.99 L546.69,207.23 L547.67,206.54 L548.68,205.9 L549.74,205.32 L550.82,204.81 L551.94,204.36 L553.08,203.98 L554.24,203.66 L555.41,203.42 L556.6,203.24 L557.8,203.14 L559,203.1 L560.2,203.14 L561.4,203.24 L562.59,203.42 L563.76,203.66 L564.92,203.98 L566.06,204.36 L567.18,204.81 L568.26,205.32 L569.32,205.9 L570.33,206.54 L571.31,207.23 L572.25,207.99 L573.14,208.79 L573.98,209.65 L574.77,210.56 L575.5,211.51 L576.18,212.5 L576.8,213.53 L577.35,214.6 L577.85,215.69 L578.27,216.82 L578.63,217.96 L578.93,219.13 L579.15,220.31 L579.3,221.5 L579.38,222.7 L579.4,223.9 L579.34,225.1 L579.21,226.3 L579.01,227.48 L578.74,228.65 L578.4,229.8 L578,230.94 L577.53,232.04 L576.99,233.12 L576.39,234.16 L575.74,235.16 L575.02,236.13 L574.25,237.05 L573.42,237.92 L568.83,233.33 L569.24,232.6 L569.6,231.85 L569.91,231.1 L570.17,230.35 L570.39,229.59 L570.57,228.83 L570.7,228.08 L570.79,227.33 L570.84,226.59 L570.85,225.86 L570.83,225.14 L570.77,224.43 L570.68,223.73 L570.55,223.05 L570.39,222.38 L570.21,221.72 L569.99,221.09 L569.75,220.47 L569.48,219.86 L569.19,219.28 L568.87,218.71 L568.53,218.16 L568.17,217.63 L567.79,217.12 L567.38,216.62 L566.95,216.15 L566.5,215.7 L566.04,215.26 L565.55,214.85 L565.04,214.46 L564.52,214.09 L563.97,213.74 L563.41,213.41 L562.83,213.11 L562.24,212.83 L561.62,212.58 L560.99,212.36 L560.34,212.17 L559.68,212 L559,211.86 L558.31,211.76 L557.6,211.69 L556.88,211.65 L556.16,211.65 L555.42,211.69 L554.67,211.77 L553.92,211.88 L553.16,212.04 L552.41,212.25 L551.65,212.5 L550.9,212.79 L550.15,213.14 L549.41,213.53 L548.69,213.97 L547.99,214.46 L547.3,215 L546.64,215.59 L546.01,216.23 L545.42,216.91 L544.86,217.64 L544.34,218.42 L543.87,219.23 L543.45,220.09 L543.08,220.98 L542.78,221.9 L542.53,222.85 L542.35,223.83 L542.23,224.82 L542.18,225.83 L542.21,226.84 L542.31,227.86 L542.48,228.87 L542.72,229.87 L543.04,230.86 L543.43,231.82 L543.89,232.76 L544.42,233.66 L545.01,234.53 L545.67,235.35 L546.38,236.12Z" fill="#b8c41c"/><path d="M556.7,222.26 L574.31,239.3 L574.8,238.81 L557.76,221.2Z" fill="#5a5a5a"/>
<path d="M683.28,237.92 L682.45,237.05 L681.68,236.13 L680.96,235.16 L680.31,234.16 L679.71,233.12 L679.17,232.04 L678.7,230.94 L678.3,229.8 L677.96,228.65 L677.69,227.48 L677.49,226.3 L677.36,225.1 L677.3,223.9 L677.32,222.7 L677.4,221.5 L677.55,220.31 L677.77,219.13 L678.07,217.96 L678.43,216.82 L678.85,215.69 L679.35,214.6 L679.9,213.53 L680.52,212.5 L681.2,211.51 L681.93,210.56 L682.72,209.65 L683.56,208.79 L684.45,207.99 L685.39,207.23 L686.37,206.54 L687.38,205.9 L688.44,205.32 L689.52,204.81 L690.64,204.36 L691.78,203.98 L692.94,203.66 L694.11,203.42 L695.3,203.24 L696.5,203.14 L697.7,203.1 L698.9,203.14 L700.1,203.24 L701.29,203.42 L702.46,203.66 L703.62,203.98 L704.76,204.36 L705.88,204.81 L706.96,205.32 L708.02,205.9 L709.03,206.54 L710.01,207.23 L710.95,207.99 L711.84,208.79 L712.68,209.65 L713.47,210.56 L714.2,211.51 L714.88,212.5 L715.5,213.53 L716.05,214.6 L716.55,215.69 L716.97,216.82 L717.33,217.96 L717.63,219.13 L717.85,220.31 L718,221.5 L718.08,222.7 L718.1,223.9 L718.04,225.1 L717.91,226.3 L717.71,227.48 L717.44,228.65 L717.1,229.8 L716.7,230.94 L716.23,232.04 L715.69,233.12 L715.09,234.16 L714.44,235.16 L713.72,236.13 L712.95,237.05 L712.12,237.92 L707.53,233.33 L707.94,232.6 L708.3,231.85 L708.61,231.1 L708.87,230.35 L709.09,229.59 L709.27,228.83 L709.4,228.08 L709.49,227.33 L709.54,226.59 L709.55,225.86 L709.53,225.14 L709.47,224.43 L709.38,223.73 L709.25,223.05 L709.09,222.38 L708.91,221.72 L708.69,221.09 L708.45,220.47 L708.18,219.86 L707.89,219.28 L707.57,218.71 L707.23,218.16 L706.87,217.63 L706.49,217.12 L706.08,216.62 L705.65,216.15 L705.2,215.7 L704.74,215.26 L704.25,214.85 L703.74,214.46 L703.22,214.09 L702.67,213.74 L702.11,213.41 L701.53,213.11 L700.94,212.83 L700.32,212.58 L699.69,212.36 L699.04,212.17 L698.38,212 L697.7,211.86 L697.01,211.76 L696.3,211.69 L695.58,211.65 L694.86,211.65 L694.12,211.69 L693.37,211.77 L692.62,211.88 L691.86,212.04 L691.11,212.25 L690.35,212.5 L689.6,212.79 L688.85,213.14 L688.11,213.53 L687.39,213.97 L686.69,214.46 L686,215 L685.34,215.59 L684.71,216.23 L684.12,216.91 L683.56,217.64 L683.04,218.42 L682.57,219.23 L682.15,220.09 L681.78,220.98 L681.48,221.9 L681.23,222.85 L681.05,223.83 L680.93,224.82 L680.88,225.83 L680.91,226.84 L681.01,227.86 L681.18,228.87 L681.42,229.87 L681.74,230.86 L682.13,231.82 L682.59,232.76 L683.12,233.66 L683.71,234.53 L684.37,235.35 L685.08,236.12Z" fill="#b8c41c"/><path d="M695.4,222.26 L713.01,239.3 L713.5,238.81 L696.46,221.2Z" fill="#5a5a5a"/>
<path d="M821.98,237.92 L821.15,237.05 L820.38,236.13 L819.66,235.16 L819.01,234.16 L818.41,233.12 L817.87,232.04 L817.4,230.94 L817,229.8 L816.66,228.65 L816.39,227.48 L816.19,226.3 L816.06,225.1 L816,223.9 L816.02,222.7 L816.1,221.5 L816.25,220.31 L816.47,219.13 L816.77,217.96 L817.13,216.82 L817.55,215.69 L818.05,214.6 L818.6,213.53 L819.22,212.5 L819.9,211.51 L820.63,210.56 L821.42,209.65 L822.26,208.79 L823.15,207.99 L824.09,207.23 L825.07,206.54 L826.08,205.9 L827.14,205.32 L828.22,204.81 L829.34,204.36 L830.48,203.98 L831.64,203.66 L832.81,203.42 L834,203.24 L835.2,203.14 L836.4,203.1 L837.6,203.14 L838.8,203.24 L839.99,203.42 L841.16,203.66 L842.32,203.98 L843.46,204.36 L844.58,204.81 L845.66,205.32 L846.72,205.9 L847.73,206.54 L848.71,207.23 L849.65,207.99 L850.54,208.79 L851.38,209.65 L852.17,210.56 L852.9,211.51 L853.58,212.5 L854.2,213.53 L854.75,214.6 L855.25,215.69 L855.67,216.82 L856.03,217.96 L856.33,219.13 L856.55,220.31 L856.7,221.5 L856.78,222.7 L856.8,223.9 L856.74,225.1 L856.61,226.3 L856.41,227.48 L856.14,228.65 L855.8,229.8 L855.4,230.94 L854.93,232.04 L854.39,233.12 L853.79,234.16 L853.14,235.16 L852.42,236.13 L851.65,237.05 L850.82,237.92 L846.23,233.33 L846.64,232.6 L847,231.85 L847.31,231.1 L847.57,230.35 L847.79,229.59 L847.97,228.83 L848.1,228.08 L848.19,227.33 L848.24,226.59 L848.25,225.86 L848.23,225.14 L848.17,224.43 L848.08,223.73 L847.95,223.05 L847.79,222.38 L847.61,221.72 L847.39,221.09 L847.15,220.47 L846.88,219.86 L846.59,219.28 L846.27,218.71 L845.93,218.16 L845.57,217.63 L845.19,217.12 L844.78,216.62 L844.35,216.15 L843.9,215.7 L843.44,215.26 L842.95,214.85 L842.44,214.46 L841.92,214.09 L841.37,213.74 L840.81,213.41 L840.23,213.11 L839.64,212.83 L839.02,212.58 L838.39,212.36 L837.74,212.17 L837.08,212 L836.4,211.86 L835.71,211.76 L835,211.69 L834.28,211.65 L833.56,211.65 L832.82,211.69 L832.07,211.77 L831.32,211.88 L830.56,212.04 L829.81,212.25 L829.05,212.5 L828.3,212.79 L827.55,213.14 L826.81,213.53 L826.09,213.97 L825.39,214.46 L824.7,215 L824.04,215.59 L823.41,216.23 L822.82,216.91 L822.26,217.64 L821.74,218.42 L821.27,219.23 L820.85,220.09 L820.48,220.98 L820.18,221.9 L819.93,222.85 L819.75,223.83 L819.63,224.82 L819.58,225.83 L819.61,226.84 L819.71,227.86 L819.88,228.87 L820.12,229.87 L820.44,230.86 L820.83,231.82 L821.29,232.76 L821.82,233.66 L822.41,234.53 L823.07,235.35 L823.78,236.12Z" fill="#b8c41c"/><path d="M834.1,222.26 L851.71,239.3 L852.2,238.81 L835.16,221.2Z" fill="#5a5a5a"/>
</svg>
<div class="a" style="left:40px;top:297.6px;font-size:12.4px;color:#333;transform:scaleX(0.88);transform-origin:0 0;">76 %</div>
<div class="a" style="left:161.2px;top:292.8px;font-size:10.6px;color:#555;transform:scaleX(0.94);transform-origin:0 0;">0 %</div>
<div class="a" style="left:250.4px;top:292.8px;font-size:10.6px;color:#555;transform:scaleX(0.94);transform-origin:0 0;">100 %</div>
<div class="hl" style="left:35px;top:312.5px;width:270px;background:#d0d0d0;"></div>

<div class="hl" style="left:311px;top:181.5px;width:133.5px;"></div>
<div class="a st" style="left:316px;top:130.07px;">Deduplication Saved S<span style="letter-spacing:-0.7px">...</span></div>
<div class="a sv" style="left:316px;top:169.37px;">0 MByte</div>
<div class="hl" style="left:449.7px;top:181.5px;width:133.5px;"></div>
<div class="a st" style="left:454.7px;top:130.07px;">Deduplication Saved S<span style="letter-spacing:-0.7px">...</span></div>
<div class="a sv" style="left:454.7px;top:169.37px;">0 %</div>
<div class="hl" style="left:588.4px;top:181.5px;width:133.5px;"></div>
<div class="a st" style="left:593.4px;top:130.07px;">Deduplication Shared <span style="letter-spacing:-0.7px">...</span></div>
<div class="a sv" style="left:593.4px;top:169.37px;">0 MByte</div>
<div class="hl" style="left:727.1px;top:181.5px;width:133.5px;"></div>
<div class="a st" style="left:732.1px;top:130.07px;">Deduplication Shared <span style="letter-spacing:-0.7px">...</span></div>
<div class="a sv" style="left:732.1px;top:169.37px;">0 %</div>
<div class="hl" style="left:311px;top:247.5px;width:133.5px;"></div>
<div class="a st" style="left:316px;top:196.07px;">Disk Status</div>
<div class="a sv" style="left:316px;top:235.37px;">mounted</div>
<div class="hl" style="left:449.7px;top:247.5px;width:133.5px;"></div>
<div class="a st" style="left:454.7px;top:196.07px;">Files Free</div>
<div class="a sv" style="left:454.7px;top:235.37px;">>99 %</div>
<div class="hl" style="left:588.4px;top:247.5px;width:133.5px;"></div>
<div class="a st" style="left:593.4px;top:196.07px;">Free Bytes</div>
<div class="a sv" style="left:593.4px;top:235.37px;">12,980 MByte</div>
<div class="hl" style="left:727.1px;top:247.5px;width:133.5px;"></div>
<div class="a st" style="left:732.1px;top:196.07px;">INodes Free</div>
<div class="a sv" style="left:732.1px;top:235.37px;">>99 %</div>
<svg class="a" style="left:0;top:0" width="885" height="340"><g transform="translate(431.2,177.3)" fill="#d2d2d2"><circle r="2.64"/><rect x="-0.92" y="-3.17" width="1.85" height="6.34" transform="rotate(0.0)"/><rect x="-0.92" y="-3.17" width="1.85" height="6.34" transform="rotate(45.0)"/><rect x="-0.92" y="-3.17" width="1.85" height="6.34" transform="rotate(90.0)"/><rect x="-0.92" y="-3.17" width="1.85" height="6.34" transform="rotate(135.0)"/><circle r="1.15" fill="#fff"/></g><path d="M438.2,174 h4.4 v0.9 h-0.6 v2.1 l1.3,1.7 h-6.2 l1.3,-1.7 v-2.1 h-0.6z" fill="#d0d0d0"/><rect x="439.95" y="178.6" width="0.9" height="2" fill="#d0d0d0"/><g transform="translate(569.9,177.3)" fill="#d2d2d2"><circle r="2.64"/><rect x="-0.92" y="-3.17" width="1.85" height="6.34" transform="rotate(0.0)"/><rect x="-0.92" y="-3.17" width="1.85" height="6.34" transform="rotate(45.0)"/><rect x="-0.92" y="-3.17" width="1.85" height="6.34" transform="rotate(90.0)"/><rect x="-0.92" y="-3.17" width="1.85" height="6.34" transform="rotate(135.0)"/><circle r="1.15" fill="#fff"/></g><path d="M576.9,174 h4.4 v0.9 h-0.6 v2.1 l1.3,1.7 h-6.2 l1.3,-1.7 v-2.1 h-0.6z" fill="#d0d0d0"/><rect x="578.65" y="178.6" width="0.9" height="2" fill="#d0d0d0"/><g transform="translate(708.6,177.3)" fill="#d2d2d2"><circle r="2.64"/><rect x="-0.92" y="-3.17" width="1.85" height="6.34" transform="rotate(0.0)"/><rect x="-0.92" y="-3.17" width="1.85" height="6.34" transform="rotate(45.0)"/><rect x="-0.92" y="-3.17" width="1.85" height="6.34" transform="rotate(90.0)"/><rect x="-0.92" y="-3.17" width="1.85" height="6.34" transform="rotate(135.0)"/><circle r="1.15" fill="#fff"/></g><path d="M715.6,174 h4.4 v0.9 h-0.6 v2.1 l1.3,1.7 h-6.2 l1.3,-1.7 v-2.1 h-0.6z" fill="#d0d0d0"/><rect x="717.35" y="178.6" width="0.9" height="2" fill="#d0d0d0"/><g transform="translate(847.3,177.3)" fill="#d2d2d2"><circle r="2.64"/><rect x="-0.92" y="-3.17" width="1.85" height="6.34" transform="rotate(0.0)"/><rect x="-0.92" y="-3.17" width="1.85" height="6.34" transform="rotate(45.0)"/><rect x="-0.92" y="-3.17" width="1.85" height="6.34" transform="rotate(90.0)"/><rect x="-0.92" y="-3.17" width="1.85" height="6.34" transform="rotate(135.0)"/><circle r="1.15" fill="#fff"/></g><path d="M854.3,174 h4.4 v0.9 h-0.6 v2.1 l1.3,1.7 h-6.2 l1.3,-1.7 v-2.1 h-0.6z" fill="#d0d0d0"/><rect x="856.05" y="178.6" width="0.9" height="2" fill="#d0d0d0"/><g transform="translate(431.2,243.3)" fill="#d2d2d2"><circle r="2.64"/><rect x="-0.92" y="-3.17" width="1.85" height="6.34" transform="rotate(0.0)"/><rect x="-0.92" y="-3.17" width="1.85" height="6.34" transform="rotate(45.0)"/><rect x="-0.92" y="-3.17" width="1.85" height="6.34" transform="rotate(90.0)"/><rect x="-0.92" y="-3.17" width="1.85" height="6.34" transform="rotate(135.0)"/><circle r="1.15" fill="#fff"/></g><path d="M438.2,240 h4.4 v0.9 h-0.6 v2.1 l1.3,1.7 h-6.2 l1.3,-1.7 v-2.1 h-0.6z" fill="#d0d0d0"/><rect x="439.95" y="244.6" width="0.9" height="2" fill="#d0d0d0"/><g transform="translate(569.9,243.3)" fill="#d2d2d2"><circle r="2.64"/><rect x="-0.92" y="-3.17" width="1.85" height="6.34" transform="rotate(0.0)"/><rect x="-0.92" y="-3.17" width="1.85" height="6.34" transform="rotate(45.0)"/><rect x="-0.92" y="-3.17" width="1.85" height="6.34" transform="rotate(90.0)"/><rect x="-0.92" y="-3.17" width="1.85" height="6.34" transform="rotate(135.0)"/><circle r="1.15" fill="#fff"/></g><path d="M576.9,240 h4.4 v0.9 h-0.6 v2.1 l1.3,1.7 h-6.2 l1.3,-1.7 v-2.1 h-0.6z" fill="#d0d0d0"/><rect x="578.65" y="244.6" width="0.9" height="2" fill="#d0d0d0"/><g transform="translate(708.6,243.3)" fill="#d2d2d2"><circle r="2.64"/><rect x="-0.92" y="-3.17" width="1.85" height="6.34" transform="rotate(0.0)"/><rect x="-0.92" y="-3.17" width="1.85" height="6.34" transform="rotate(45.0)"/><rect x="-0.92" y="-3.17" width="1.85" height="6.34" transform="rotate(90.0)"/><rect x="-0.92" y="-3.17" width="1.85" height="6.34" transform="rotate(135.0)"/><circle r="1.15" fill="#fff"/></g><path d="M715.6,240 h4.4 v0.9 h-0.6 v2.1 l1.3,1.7 h-6.2 l1.3,-1.7 v-2.1 h-0.6z" fill="#d0d0d0"/><rect x="717.35" y="244.6" width="0.9" height="2" fill="#d0d0d0"/><g transform="translate(847.3,243.3)" fill="#d2d2d2"><circle r="2.64"/><rect x="-0.92" y="-3.17" width="1.85" height="6.34" transform="rotate(0.0)"/><rect x="-0.92" y="-3.17" width="1.85" height="6.34" transform="rotate(45.0)"/><rect x="-0.92" y="-3.17" width="1.85" height="6.34" transform="rotate(90.0)"/><rect x="-0.92" y="-3.17" width="1.85" height="6.34" transform="rotate(135.0)"/><circle r="1.15" fill="#fff"/></g><path d="M854.3,240 h4.4 v0.9 h-0.6 v2.1 l1.3,1.7 h-6.2 l1.3,-1.7 v-2.1 h-0.6z" fill="#d0d0d0"/><rect x="856.05" y="244.6" width="0.9" height="2" fill="#d0d0d0"/><g transform="translate(289.3,307)" fill="#d2d2d2"><circle r="2.88"/><rect x="-1.01" y="-3.46" width="2.02" height="6.91" transform="rotate(0.0)"/><rect x="-1.01" y="-3.46" width="2.02" height="6.91" transform="rotate(45.0)"/><rect x="-1.01" y="-3.46" width="2.02" height="6.91" transform="rotate(90.0)"/><rect x="-1.01" y="-3.46" width="2.02" height="6.91" transform="rotate(135.0)"/><circle r="1.26" fill="#fff"/></g><path d="M298.3,303.5 h4.4 v0.9 h-0.6 v2.1 l1.3,1.7 h-6.2 l1.3,-1.7 v-2.1 h-0.6z" fill="#d0d0d0"/><rect x="300.05" y="308.1" width="0.9" height="2" fill="#d0d0d0"/></svg>

<!-- card 2 -->
<div class="card" style="left:31px;top:337px;width:851px;height:340px;"></div>
<div class="a th" style="left:58px;">Channel</div>
<div class="a th" style="left:210px;">ID</div>
<div class="a th" style="left:297px;">Last Value</div>
<div class="a th" style="left:486.3px;transform:scaleX(1.035);">Minimum</div>
<div class="a th" style="left:635.3px;transform:scaleX(1.03);">Maximum</div>
<svg class="a" style="left:0;top:337px" width="885" height="329"><path d="M105.2,48 h7.2 l-3.6,3.5z" fill="#1a1a2a"/><path d="M225.5,46.1 l3.75,-4 l3.75,4z M225.5,47.5 l3.75,4 l3.75,-4z" fill="#d3d3d3"/><path d="M355.5,46.1 l3.75,-4 l3.75,4z M355.5,47.5 l3.75,4 l3.75,-4z" fill="#d3d3d3"/><path d="M540.6,46.1 l3.75,-4 l3.75,4z M540.6,47.5 l3.75,4 l3.75,-4z" fill="#d3d3d3"/><path d="M692.6,46.1 l3.75,-4 l3.75,4z M692.6,47.5 l3.75,4 l3.75,-4z" fill="#d3d3d3"/><rect x="49" y="56" width="815" height="1" fill="#e3e3e3"/><rect x="49" y="83" width="815" height="1" fill="#e3e3e3"/><rect x="49" y="110" width="815" height="1" fill="#e3e3e3"/><rect x="49" y="137" width="815" height="1" fill="#e3e3e3"/><rect x="49" y="164" width="815" height="1" fill="#e3e3e3"/><rect x="49" y="191" width="815" height="1" fill="#e3e3e3"/><rect x="49" y="218" width="815" height="1" fill="#e3e3e3"/><rect x="49" y="245" width="815" height="1" fill="#e3e3e3"/><rect x="49" y="272" width="815" height="1" fill="#e3e3e3"/><rect x="49" y="299" width="815" height="1" fill="#e3e3e3"/><rect x="49" y="326" width="815" height="1" fill="#e3e3e3"/><g transform="translate(788.3,70.4)" fill="#3a3a3a"><circle r="3.28"/><rect x="-0.86" y="-3.94" width="1.72" height="7.87" transform="rotate(0.0)"/><rect x="-0.86" y="-3.94" width="1.72" height="7.87" transform="rotate(45.0)"/><rect x="-0.86" y="-3.94" width="1.72" height="7.87" transform="rotate(90.0)"/><rect x="-0.86" y="-3.94" width="1.72" height="7.87" transform="rotate(135.0)"/><circle r="1.43" fill="#fff"/></g><g transform="translate(782.6,75.6)" fill="#3a3a3a"><circle r="2"/><rect x="-0.62" y="-2.4" width="1.25" height="4.8" transform="rotate(0.0)"/><rect x="-0.62" y="-2.4" width="1.25" height="4.8" transform="rotate(45.0)"/><rect x="-0.62" y="-2.4" width="1.25" height="4.8" transform="rotate(90.0)"/><rect x="-0.62" y="-2.4" width="1.25" height="4.8" transform="rotate(135.0)"/><circle r="0.88" fill="#fff"/></g><g transform="translate(788.3,97.4)" fill="#3a3a3a"><circle r="3.28"/><rect x="-0.86" y="-3.94" width="1.72" height="7.87" transform="rotate(0.0)"/><rect x="-0.86" y="-3.94" width="1.72" height="7.87" transform="rotate(45.0)"/><rect x="-0.86" y="-3.94" width="1.72" height="7.87" transform="rotate(90.0)"/><rect x="-0.86" y="-3.94" width="1.72" height="7.87" transform="rotate(135.0)"/><circle r="1.43" fill="#fff"/></g><g transform="translate(782.6,102.6)" fill="#3a3a3a"><circle r="2"/><rect x="-0.62" y="-2.4" width="1.25" height="4.8" transform="rotate(0.0)"/><rect x="-0.62" y="-2.4" width="1.25" height="4.8" transform="rotate(45.0)"/><rect x="-0.62" y="-2.4" width="1.25" height="4.8" transform="rotate(90.0)"/><rect x="-0.62" y="-2.4" width="1.25" height="4.8" transform="rotate(135.0)"/><circle r="0.88" fill="#fff"/></g><g transform="translate(788.3,124.4)" fill="#3a3a3a"><circle r="3.28"/><rect x="-0.86" y="-3.94" width="1.72" height="7.87" transform="rotate(0.0)"/><rect x="-0.86" y="-3.94" width="1.72" height="7.87" transform="rotate(45.0)"/><rect x="-0.86" y="-3.94" width="1.72" height="7.87" transform="rotate(90.0)"/><rect x="-0.86" y="-3.94" width="1.72" height="7.87" transform="rotate(135.0)"/><circle r="1.43" fill="#fff"/></g><g transform="translate(782.6,129.6)" fill="#3a3a3a"><circle r="2"/><rect x="-0.62" y="-2.4" width="1.25" height="4.8" transform="rotate(0.0)"/><rect x="-0.62" y="-2.4" width="1.25" height="4.8" transform="rotate(45.0)"/><rect x="-0.62" y="-2.4" width="1.25" height="4.8" transform="rotate(90.0)"/><rect x="-0.62" y="-2.4" width="1.25" height="4.8" transform="rotate(135.0)"/><circle r="0.88" fill="#fff"/></g><g transform="translate(788.3,151.4)" fill="#3a3a3a"><circle r="3.28"/><rect x="-0.86" y="-3.94" width="1.72" height="7.87" transform="rotate(0.0)"/><rect x="-0.86" y="-3.94" width="1.72" height="7.87" transform="rotate(45.0)"/><rect x="-0.86" y="-3.94" width="1.72" height="7.87" transform="rotate(90.0)"/><rect x="-0.86" y="-3.94" width="1.72" height="7.87" transform="rotate(135.0)"/><circle r="1.43" fill="#fff"/></g><g transform="translate(782.6,156.6)" fill="#3a3a3a"><circle r="2"/><rect x="-0.62" y="-2.4" width="1.25" height="4.8" transform="rotate(0.0)"/><rect x="-0.62" y="-2.4" width="1.25" height="4.8" transform="rotate(45.0)"/><rect x="-0.62" y="-2.4" width="1.25" height="4.8" transform="rotate(90.0)"/><rect x="-0.62" y="-2.4" width="1.25" height="4.8" transform="rotate(135.0)"/><circle r="0.88" fill="#fff"/></g><g transform="translate(788.3,178.4)" fill="#3a3a3a"><circle r="3.28"/><rect x="-0.86" y="-3.94" width="1.72" height="7.87" transform="rotate(0.0)"/><rect x="-0.86" y="-3.94" width="1.72" height="7.87" transform="rotate(45.0)"/><rect x="-0.86" y="-3.94" width="1.72" height="7.87" transform="rotate(90.0)"/><rect x="-0.86" y="-3.94" width="1.72" height="7.87" transform="rotate(135.0)"/><circle r="1.43" fill="#fff"/></g><g transform="translate(782.6,183.6)" fill="#3a3a3a"><circle r="2"/><rect x="-0.62" y="-2.4" width="1.25" height="4.8" transform="rotate(0.0)"/><rect x="-0.62" y="-2.4" width="1.25" height="4.8" transform="rotate(45.0)"/><rect x="-0.62" y="-2.4" width="1.25" height="4.8" transform="rotate(90.0)"/><rect x="-0.62" y="-2.4" width="1.25" height="4.8" transform="rotate(135.0)"/><circle r="0.88" fill="#fff"/></g><g transform="translate(788.3,205.4)" fill="#3a3a3a"><circle r="3.28"/><rect x="-0.86" y="-3.94" width="1.72" height="7.87" transform="rotate(0.0)"/><rect x="-0.86" y="-3.94" width="1.72" height="7.87" transform="rotate(45.0)"/><rect x="-0.86" y="-3.94" width="1.72" height="7.87" transform="rotate(90.0)"/><rect x="-0.86" y="-3.94" width="1.72" height="7.87" transform="rotate(135.0)"/><circle r="1.43" fill="#fff"/></g><g transform="translate(782.6,210.6)" fill="#3a3a3a"><circle r="2"/><rect x="-0.62" y="-2.4" width="1.25" height="4.8" transform="rotate(0.0)"/><rect x="-0.62" y="-2.4" width="1.25" height="4.8" transform="rotate(45.0)"/><rect x="-0.62" y="-2.4" width="1.25" height="4.8" transform="rotate(90.0)"/><rect x="-0.62" y="-2.4" width="1.25" height="4.8" transform="rotate(135.0)"/><circle r="0.88" fill="#fff"/></g><g transform="translate(788.3,232.4)" fill="#3a3a3a"><circle r="3.28"/><rect x="-0.86" y="-3.94" width="1.72" height="7.87" transform="rotate(0.0)"/><rect x="-0.86" y="-3.94" width="1.72" height="7.87" transform="rotate(45.0)"/><rect x="-0.86" y="-3.94" width="1.72" height="7.87" transform="rotate(90.0)"/><rect x="-0.86" y="-3.94" width="1.72" height="7.87" transform="rotate(135.0)"/><circle r="1.43" fill="#fff"/></g><g transform="translate(782.6,237.6)" fill="#3a3a3a"><circle r="2"/><rect x="-0.62" y="-2.4" width="1.25" height="4.8" transform="rotate(0.0)"/><rect x="-0.62" y="-2.4" width="1.25" height="4.8" transform="rotate(45.0)"/><rect x="-0.62" y="-2.4" width="1.25" height="4.8" transform="rotate(90.0)"/><rect x="-0.62" y="-2.4" width="1.25" height="4.8" transform="rotate(135.0)"/><circle r="0.88" fill="#fff"/></g><g transform="translate(788.3,259.4)" fill="#3a3a3a"><circle r="3.28"/><rect x="-0.86" y="-3.94" width="1.72" height="7.87" transform="rotate(0.0)"/><rect x="-0.86" y="-3.94" width="1.72" height="7.87" transform="rotate(45.0)"/><rect x="-0.86" y="-3.94" width="1.72" height="7.87" transform="rotate(90.0)"/><rect x="-0.86" y="-3.94" width="1.72" height="7.87" transform="rotate(135.0)"/><circle r="1.43" fill="#fff"/></g><g transform="translate(782.6,264.6)" fill="#3a3a3a"><circle r="2"/><rect x="-0.62" y="-2.4" width="1.25" height="4.8" transform="rotate(0.0)"/><rect x="-0.62" y="-2.4" width="1.25" height="4.8" transform="rotate(45.0)"/><rect x="-0.62" y="-2.4" width="1.25" height="4.8" transform="rotate(90.0)"/><rect x="-0.62" y="-2.4" width="1.25" height="4.8" transform="rotate(135.0)"/><circle r="0.88" fill="#fff"/></g><g transform="translate(788.3,286.4)" fill="#3a3a3a"><circle r="3.28"/><rect x="-0.86" y="-3.94" width="1.72" height="7.87" transform="rotate(0.0)"/><rect x="-0.86" y="-3.94" width="1.72" height="7.87" transform="rotate(45.0)"/><rect x="-0.86" y="-3.94" width="1.72" height="7.87" transform="rotate(90.0)"/><rect x="-0.86" y="-3.94" width="1.72" height="7.87" transform="rotate(135.0)"/><circle r="1.43" fill="#fff"/></g><g transform="translate(782.6,291.6)" fill="#3a3a3a"><circle r="2"/><rect x="-0.62" y="-2.4" width="1.25" height="4.8" transform="rotate(0.0)"/><rect x="-0.62" y="-2.4" width="1.25" height="4.8" transform="rotate(45.0)"/><rect x="-0.62" y="-2.4" width="1.25" height="4.8" transform="rotate(90.0)"/><rect x="-0.62" y="-2.4" width="1.25" height="4.8" transform="rotate(135.0)"/><circle r="0.88" fill="#fff"/></g><g transform="translate(788.3,313.4)" fill="#3a3a3a"><circle r="3.28"/><rect x="-0.86" y="-3.94" width="1.72" height="7.87" transform="rotate(0.0)"/><rect x="-0.86" y="-3.94" width="1.72" height="7.87" transform="rotate(45.0)"/><rect x="-0.86" y="-3.94" width="1.72" height="7.87" transform="rotate(90.0)"/><rect x="-0.86" y="-3.94" width="1.72" height="7.87" transform="rotate(135.0)"/><circle r="1.43" fill="#fff"/></g><g transform="translate(782.6,318.6)" fill="#3a3a3a"><circle r="2"/><rect x="-0.62" y="-2.4" width="1.25" height="4.8" transform="rotate(0.0)"/><rect x="-0.62" y="-2.4" width="1.25" height="4.8" transform="rotate(45.0)"/><rect x="-0.62" y="-2.4" width="1.25" height="4.8" transform="rotate(90.0)"/><rect x="-0.62" y="-2.4" width="1.25" height="4.8" transform="rotate(135.0)"/><circle r="0.88" fill="#fff"/></g></svg>
<div class="a td" style="left:58px;top:405.34px;">Deduplication Saved Sp<span style="letter-spacing:-0.9px">...</span></div>
<div class="a td" style="left:210px;top:405.34px;">7</div>
<div class="a td tc" style="left:231px;width:200px;text-align:center;top:405.34px;">0 MByte</div>
<div class="a td tr" style="left:349px;width:200px;text-align:right;top:405.34px;">0 MByte</div>
<div class="a td tr" style="left:502px;width:200px;text-align:right;top:405.34px;">0 MByte</div>
<div class="a td" style="left:58px;top:432.34px;">Deduplication Saved Sp<span style="letter-spacing:-0.9px">...</span></div>
<div class="a td" style="left:210px;top:432.34px;">6</div>
<div class="a td tc" style="left:231px;width:200px;text-align:center;top:432.34px;">0 %</div>
<div class="a td tr" style="left:349px;width:200px;text-align:right;top:432.34px;">0 %</div>
<div class="a td tr" style="left:502px;width:200px;text-align:right;top:432.34px;">0 %</div>
<div class="a td" style="left:58px;top:459.34px;">Deduplication Shared S<span style="letter-spacing:-0.9px">...</span></div>
<div class="a td" style="left:210px;top:459.34px;">5</div>
<div class="a td tc" style="left:231px;width:200px;text-align:center;top:459.34px;">0 MByte</div>
<div class="a td tr" style="left:349px;width:200px;text-align:right;top:459.34px;">0 MByte</div>
<div class="a td tr" style="left:502px;width:200px;text-align:right;top:459.34px;">0 MByte</div>
<div class="a td" style="left:58px;top:486.34px;">Deduplication Shared S<span style="letter-spacing:-0.9px">...</span></div>
<div class="a td" style="left:210px;top:486.34px;">4</div>
<div class="a td tc" style="left:231px;width:200px;text-align:center;top:486.34px;">0 %</div>
<div class="a td tr" style="left:349px;width:200px;text-align:right;top:486.34px;">0 %</div>
<div class="a td tr" style="left:502px;width:200px;text-align:right;top:486.34px;">0 %</div>
<div class="a td" style="left:58px;top:513.34px;">Disk Status</div>
<div class="a td" style="left:210px;top:513.34px;">8</div>
<div class="a td tc" style="left:231px;width:200px;text-align:center;top:513.34px;">mounted</div>
<div class="a td tr" style="left:349px;width:200px;text-align:right;top:513.34px;">mounted</div>
<div class="a td tr" style="left:502px;width:200px;text-align:right;top:513.34px;">mounted</div>
<div class="a td" style="left:58px;top:540.34px;">Downtime</div>
<div class="a td" style="left:210px;top:540.34px;">-4</div>
<div class="a td" style="left:58px;top:567.34px;">Files Free</div>
<div class="a td" style="left:210px;top:567.34px;">3</div>
<div class="a td tc" style="left:231px;width:200px;text-align:center;top:567.34px;">&gt;99 %</div>
<div class="a td tr" style="left:349px;width:200px;text-align:right;top:567.34px;">&gt;99 %</div>
<div class="a td tr" style="left:502px;width:200px;text-align:right;top:567.34px;">&gt;99 %</div>
<div class="a td" style="left:58px;top:594.34px;">Free Bytes</div>
<div class="a td" style="left:210px;top:594.34px;">1</div>
<div class="a td tc" style="left:231px;width:200px;text-align:center;top:594.34px;">12,980 MByte</div>
<div class="a td tr" style="left:349px;width:200px;text-align:right;top:594.34px;">12,922 MByte</div>
<div class="a td tr" style="left:502px;width:200px;text-align:right;top:594.34px;">12,980 MByte</div>
<div class="a td" style="left:58px;top:621.34px;">Free Space</div>
<div class="a td" style="left:210px;top:621.34px;">0</div>
<div class="a td tc" style="left:231px;width:200px;text-align:center;top:621.34px;">76 %</div>
<div class="a td tr" style="left:349px;width:200px;text-align:right;top:621.34px;">76 %</div>
<div class="a td tr" style="left:502px;width:200px;text-align:right;top:621.34px;">76 %</div>
<div class="a td" style="left:58px;top:648.34px;">INodes Free</div>
<div class="a td" style="left:210px;top:648.34px;">2</div>
<div class="a td tc" style="left:231px;width:200px;text-align:center;top:648.34px;">&gt;99 %</div>
<div class="a td tr" style="left:349px;width:200px;text-align:right;top:648.34px;">&gt;99 %</div>
<div class="a td tr" style="left:502px;width:200px;text-align:right;top:648.34px;">&gt;99 %</div>
</body></html>
